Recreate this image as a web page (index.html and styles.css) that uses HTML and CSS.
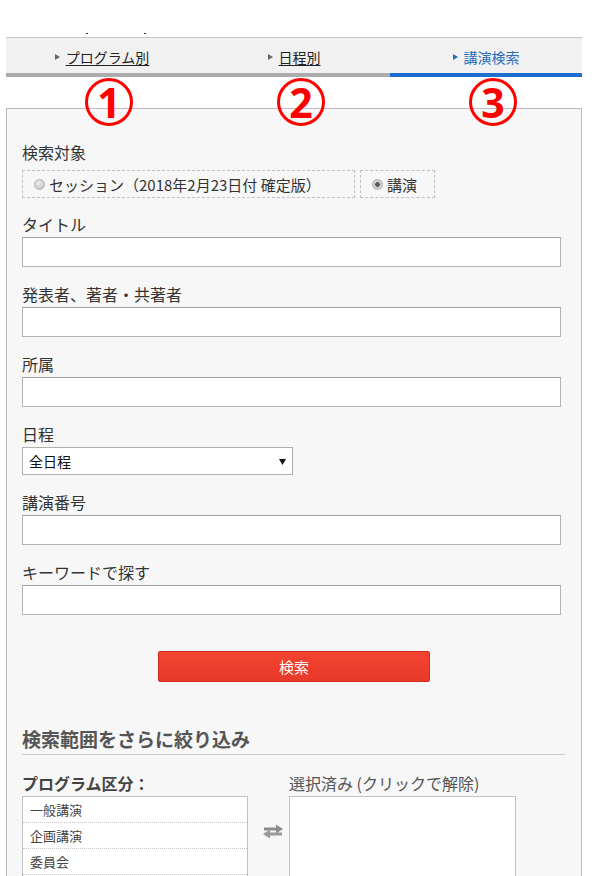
FILE: index.html
```html
<!DOCTYPE html>
<html lang="ja">
<head>
<meta charset="utf-8">
<title>講演検索</title>
<link rel="stylesheet" href="styles.css">
</head>
<body>
<div class="top"><span class="dot dot-a"></span><span class="dot dot-b"></span></div>
<div class="wrap">
  <div class="tabs">
    <div class="tab"><span class="tri"></span><a class="tab-link">プログラム別</a></div>
    <div class="tab"><span class="tri"></span><a class="tab-link">日程別</a></div>
    <div class="tab active"><span class="tri"></span><a class="tab-link">講演検索</a></div>
  </div>
  <div class="marks">
    <div class="mark-cell"><span class="mark">1</span></div>
    <div class="mark-cell"><span class="mark">2</span></div>
    <div class="mark-cell"><span class="mark">3</span></div>
  </div>
  <div class="panel">
    <div class="label first">検索対象</div>
    <div class="radios">
      <div class="radio r-session"><span class="rb"></span><span>セッション（2018年2月23日付 確定版）</span></div>
      <div class="radio r-talk"><span class="rb on"></span><span>講演</span></div>
    </div>

    <div class="label">タイトル</div>
    <input class="field" type="text">

    <div class="label">発表者、著者・共著者</div>
    <input class="field" type="text">

    <div class="label">所属</div>
    <input class="field" type="text">

    <div class="label">日程</div>
    <div class="select"><span>全日程</span><svg class="caret" width="7" height="6" viewBox="0 0 7 6"><path d="M0 0H7L3.5 6Z" fill="#111"/></svg></div>

    <div class="label">講演番号</div>
    <input class="field" type="text">

    <div class="label">キーワードで探す</div>
    <input class="field" type="text">

    <button class="btn" type="button">検索</button>

    <h2 class="heading">検索範囲をさらに絞り込み</h2>

    <div class="pick">
      <div class="col">
        <div class="col-title bold">プログラム区分：</div>
        <ul class="list">
          <li>一般講演</li>
          <li>企画講演</li>
          <li>委員会</li>
        </ul>
      </div>
      <div class="mid">
        <svg width="22" height="15" viewBox="0 0 22 15">
          <path d="M2 3.5H14V0.5L21 5L14 9.5V6.5H2Z" fill="#8c8c8c"/>
          <path d="M20 8.5H8V5.5L1 10L8 14.5V11.5H20Z" fill="#9a9a9a"/>
        </svg>
      </div>
      <div class="col right">
        <div class="col-title">選択済み (クリックで解除)</div>
        <div class="box"></div>
      </div>
    </div>
  </div>
</div>
</body>
</html>
```

FILE: styles.css
```css
html, body {
  margin: 0;
  padding: 0;
  background: #fff;
}
body {
  font-family: "Noto Sans CJK JP", "Noto Sans", sans-serif;
  color: #333;
  overflow: hidden;
}
.top {
  height: 37px;
  box-sizing: border-box;
  padding-top: 33px;
  display: flex;
}
.dot {
  display: block;
  width: 2px;
  height: 1px;
  background: #333;
}
.dot-a { margin-left: 86px; }
.dot-b { margin-left: 56px; }

.wrap {
  position: relative;
  margin-left: 6px;
  width: 576px;
}
.tabs {
  display: flex;
  border-top: 1px solid #c6c6c6;
  background: #f1f1f1;
}
.tab {
  flex: 1;
  border-bottom: 4px solid #acacac;
  display: flex;
  align-items: center;
  justify-content: center;
  font-size: 14px;
  padding-top: 2px;
  height: 33px;
}
.tab-link {
  color: #222;
  text-decoration: underline;
  text-underline-offset: 2px;
}
.tri {
  width: 0;
  height: 0;
  border-top: 3px solid transparent;
  border-bottom: 3px solid transparent;
  border-left: 5px solid #666;
  margin-right: 6px;
}
.tab.active {
  border-bottom-color: #1b6fce;
}
.tab.active .tab-link {
  color: #2a6db8;
  text-decoration: none;
}
.tab.active .tri {
  border-left-color: #2a6db8;
}

.marks {
  position: absolute;
  left: 0;
  top: 41px;
  width: 100%;
  display: flex;
  pointer-events: none;
}
.mark-cell {
  flex: 1;
  display: flex;
  justify-content: center;
  padding-left: 14px;
}
.mark {
  box-sizing: border-box;
  width: 48px;
  height: 48px;
  border: 3px solid #ff0000;
  border-radius: 50%;
  display: flex;
  align-items: center;
  justify-content: center;
  font-family: "Noto Sans", "Liberation Sans", sans-serif;
  font-size: 41px;
  font-weight: bold;
  line-height: 1;
  color: #ff0000;
  padding-top: 1px;
}

.panel {
  margin-top: 31px;
  border: 1px solid #bdb8c4;
  background: #f7f7f7;
  padding: 32px 20px 0 15px;
  height: 900px;
}
.label {
  font-size: 16px;
  line-height: 22px;
  height: 22px;
  margin-top: 16px;
  margin-bottom: 2px;
  color: #333;
}
.label.first {
  margin-top: 0;
  margin-bottom: 7px;
}
.radios {
  display: flex;
  gap: 5px;
  margin-bottom: -1px;
}
.radio {
  box-sizing: border-box;
  height: 28px;
  border: 1px dashed #c2c2c2;
  display: flex;
  align-items: center;
  font-size: 15px;
  color: #333;
  padding-left: 11px;
}
.r-session { width: 333px; }
.r-talk { width: 75px; }
.rb {
  width: 11px;
  height: 11px;
  border-radius: 50%;
  background: radial-gradient(circle at 40% 35%, #eee, #bdbdbd);
  border: 1px solid #b0b0b0;
  margin-right: 4px;
  box-sizing: border-box;
}
.rb.on {
  background: radial-gradient(circle, #555 0, #555 2px, #c9c9c9 2.5px, #dcdcdc 100%);
}
.field {
  display: block;
  box-sizing: border-box;
  width: 100%;
  height: 30px;
  margin: 0;
  border: 1px solid #b4b4b4;
  border-top-color: #a0a0a0;
  background: #fff;
  border-radius: 0;
  padding: 0 6px;
  font: inherit;
}
.select {
  box-sizing: border-box;
  width: 271px;
  height: 28px;
  border: 1px solid #b0b0b0;
  background: #fff;
  display: flex;
  align-items: center;
  justify-content: space-between;
  padding: 0 6px 0 6px;
  font-size: 14px;
  color: #111;
}
.caret {
  display: block;
  margin-top: 1px;
}
.btn {
  display: block;
  margin: 36px 0 0 136px;
  width: 272px;
  height: 31px;
  background: linear-gradient(#f2442f, #e8392a);
  border: 1px solid #cf2a1a;
  border-radius: 2px;
  color: #fff;
  font: inherit;
  font-size: 15px;
  padding: 0;
}
.heading {
  margin: 44px -4px 0 0;
  font-size: 19px;
  font-weight: bold;
  line-height: 26px;
  color: #555;
  padding-bottom: 2px;
  border-bottom: 1px solid #cfcfcf;
}
.pick {
  display: flex;
  margin-top: 17px;
}
.col {
  width: 226px;
}
.col-title {
  font-size: 16px;
  line-height: 22px;
  height: 22px;
  margin-bottom: 2px;
  color: #555;
  white-space: nowrap;
}
.col-title.bold {
  font-weight: bold;
  color: #444;
}
.list {
  list-style: none;
  margin: 0;
  padding: 0;
  border: 1px solid #c2c2c2;
  background: #fff;
  height: 140px;
}
.list li {
  height: 25px;
  line-height: 25px;
  padding-left: 7px;
  font-size: 13px;
  color: #444;
  border-bottom: 1px dotted #c4c4c4;
}
.mid {
  width: 41px;
  padding-top: 52px;
  padding-left: 14px;
  box-sizing: border-box;
}
.mid svg { display: block; }
.col.right {
  width: 227px;
}
.box {
  border: 1px solid #c2c2c2;
  background: #fff;
  height: 140px;
}
```
